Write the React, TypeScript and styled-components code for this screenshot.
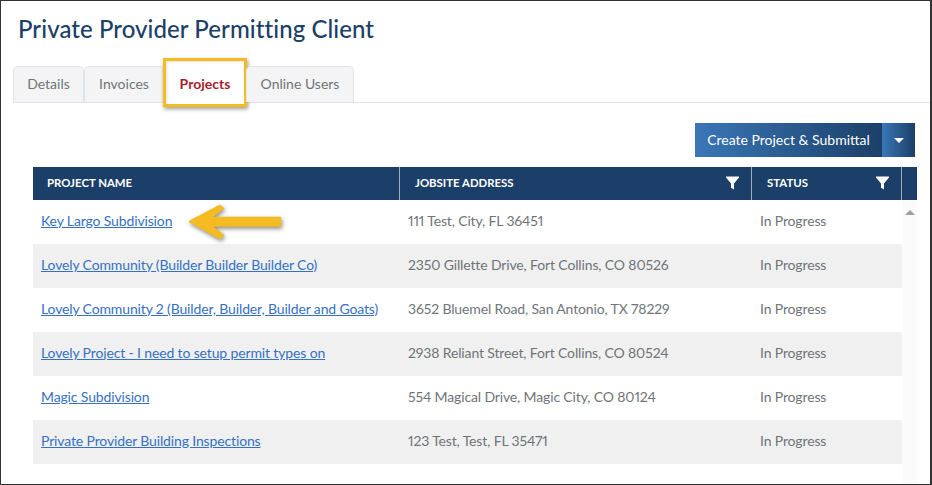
import { createGlobalStyle } from 'styled-components';
import styled from 'styled-components';

const GlobalStyle = createGlobalStyle`
  html, body {
    margin: 0;
    padding: 0;
    background: #fff;
  }
  * {
    box-sizing: border-box;
  }
`;

const Page = styled.div`
  position: relative;
  width: 932px;
  height: 485px;
  overflow: hidden;
  border-top: 1px solid #333;
  border-left: 1px solid #333;
  border-right: 2px solid #333;
  border-bottom: 1px solid #333;
  font-family: 'Lato', 'Open Sans', sans-serif;
  padding: 0 0 0 12px;
`;

const Title = styled.h1`
  margin: 0;
  padding: 13px 0 0 5px;
  height: 65px;
  font-size: 24px;
  line-height: 30px;
  font-weight: 500;
  letter-spacing: 0.07px;
  color: #1b3f68;
`;

const TabBar = styled.div`
  display: flex;
  height: 37px;
  border-bottom: 1px solid #e1e4ea;
`;

const Tab = styled.div<{ $active?: boolean; $width: number }>`
  position: relative;
  width: ${props => props.$width}px;
  height: ${props => (props.$active ? 37 : 36)}px;
  display: flex;
  align-items: center;
  justify-content: center;
  padding-bottom: 3px;
  font-size: 14px;
  font-weight: ${props => (props.$active ? 700 : 400)};
  color: ${props => (props.$active ? '#a81c2c' : '#6f7479')};
  background: ${props => (props.$active ? '#fff' : '#f4f4f4')};
  border: ${props => (props.$active ? 'none' : '1px solid #e1e4ea')};
  border-bottom: none;
  border-radius: 5px 5px 0 0;
`;

const Highlight = styled.div`
  position: absolute;
  left: -1px;
  top: -8px;
  right: -1px;
  bottom: -4px;
  border: 3px solid #f4bb22;
  box-shadow: 1px 2px 4px rgba(0, 0, 0, 0.4), inset 1px 1px 3px rgba(0, 0, 0, 0.12);
  pointer-events: none;
`;

const Toolbar = styled.div`
  display: flex;
  justify-content: flex-end;
  padding: 20px 15px 0 0;
  height: 64px;
`;

const SplitButton = styled.div`
  display: flex;
  height: 34px;
  color: #fff;
  font-size: 14px;
`;

const ButtonMain = styled.div`
  width: 187px;
  display: flex;
  align-items: center;
  justify-content: center;
  padding-bottom: 2px;
  background: linear-gradient(to right, #3a77b7, #1b3f68);
`;

const ButtonCaret = styled.div`
  width: 33px;
  display: flex;
  align-items: center;
  justify-content: center;
  background: linear-gradient(to right, #3a77b7, #1b3f68);

  &::after {
    content: '';
    border-left: 5px solid transparent;
    border-right: 5px solid transparent;
    border-top: 5px solid #fff;
  }
`;

const Table = styled.div`
  margin-left: 20px;
  width: 884px;
`;

const HeaderRow = styled.div`
  display: grid;
  grid-template-columns: 367px 352px 150px 15px;
  height: 33px;
  background: #1b3f68;
`;

const HeaderCell = styled.div`
  display: flex;
  align-items: center;
  justify-content: space-between;
  padding: 0 12px 2px 15px;
  color: #fff;
  font-size: 11.4px;
  font-weight: 700;
  border-right: 1px solid #a3aebc;

  &:first-child {
    padding-left: 14px;
  }
`;

const Body = styled.div`
  position: relative;
  width: 869px;
`;

const ScrollTrack = styled.div`
  position: absolute;
  top: 0;
  right: -15px;
  width: 15px;
  height: 284px;
  background: #fbfbfb;

  &::before {
    content: '';
    position: absolute;
    top: 10px;
    left: 3px;
    border-left: 5px solid transparent;
    border-right: 5px solid transparent;
    border-bottom: 5px solid #a0a0a0;
  }
`;

const DataRow = styled.div<{ $shaded: boolean }>`
  display: grid;
  grid-template-columns: 367px 352px 150px;
  height: 44px;
  align-items: center;
  padding-bottom: 4px;
  font-size: 14px;
  letter-spacing: -0.14px;
  font-variant-numeric: proportional-nums;
  color: #6f7479;
  background: ${props => (props.$shaded ? '#f0f0f0' : '#fff')};
`;

const Cell = styled.div`
  padding-left: 8px;
`;

const ProjectLink = styled.a`
  color: #3570c4;
  text-decoration: underline;
`;

const Arrow = styled.svg`
  position: absolute;
  left: 187px;
  top: 202px;
  filter: drop-shadow(1px 2px 2px rgba(0, 0, 0, 0.45));
`;

const Filter = () => (
  <svg width="13" height="14" viewBox="0 0 13 14">
    <path d="M0 0.5H13V1.5L8 7.5V13.5L5 11.8V7.5L0 1.5Z" fill="#fff" />
  </svg>
);

const projects = [
  { name: 'Key Largo Subdivision', address: '111 Test, City, FL 36451' },
  { name: 'Lovely Community (Builder Builder Builder Co)', address: '2350 Gillette Drive, Fort Collins, CO 80526' },
  { name: 'Lovely Community 2 (Builder, Builder, Builder and Goats)', address: '3652 Bluemel Road, San Antonio, TX 78229' },
  { name: 'Lovely Project - I need to setup permit types on', address: '2938 Reliant Street, Fort Collins, CO 80524' },
  { name: 'Magic Subdivision', address: '554 Magical Drive, Magic City, CO 80124' },
  { name: 'Private Provider Building Inspections', address: '123 Test, Test, FL 35471' },
];

const App = () => (
  <Page>
    <GlobalStyle />
    <Title>Private Provider Permitting Client</Title>
    <TabBar>
      <Tab $width={71}>Details</Tab>
      <Tab $width={80}>Invoices</Tab>
      <Tab $active $width={82}>
        Projects
        <Highlight />
      </Tab>
      <Tab $width={108}>Online Users</Tab>
    </TabBar>
    <Toolbar>
      <SplitButton>
        <ButtonMain>Create Project &amp; Submittal</ButtonMain>
        <ButtonCaret />
      </SplitButton>
    </Toolbar>
    <Table>
      <HeaderRow>
        <HeaderCell>PROJECT NAME</HeaderCell>
        <HeaderCell>
          JOBSITE ADDRESS
          <Filter />
        </HeaderCell>
        <HeaderCell>
          STATUS
          <Filter />
        </HeaderCell>
        <div />
      </HeaderRow>
      <Body>
        <ScrollTrack />
        {projects.map((project, index) => (
          <DataRow key={project.name} $shaded={index % 2 === 1}>
            <Cell>
              <ProjectLink href="#">{project.name}</ProjectLink>
            </Cell>
            <Cell>{project.address}</Cell>
            <Cell>In Progress</Cell>
          </DataRow>
        ))}
      </Body>
    </Table>
    <Arrow width="98" height="40" viewBox="0 0 98 40">
      <path
        d="M1.5 18.5L32 2.5L35.5 5.5L23 14.5H92.5V23H23L35.5 32L32 35.5Z"
        fill="#f4bb22"
        stroke="#f4bb22"
        strokeWidth="1.5"
        strokeLinejoin="round"
      />
    </Arrow>
  </Page>
);

export default App;
